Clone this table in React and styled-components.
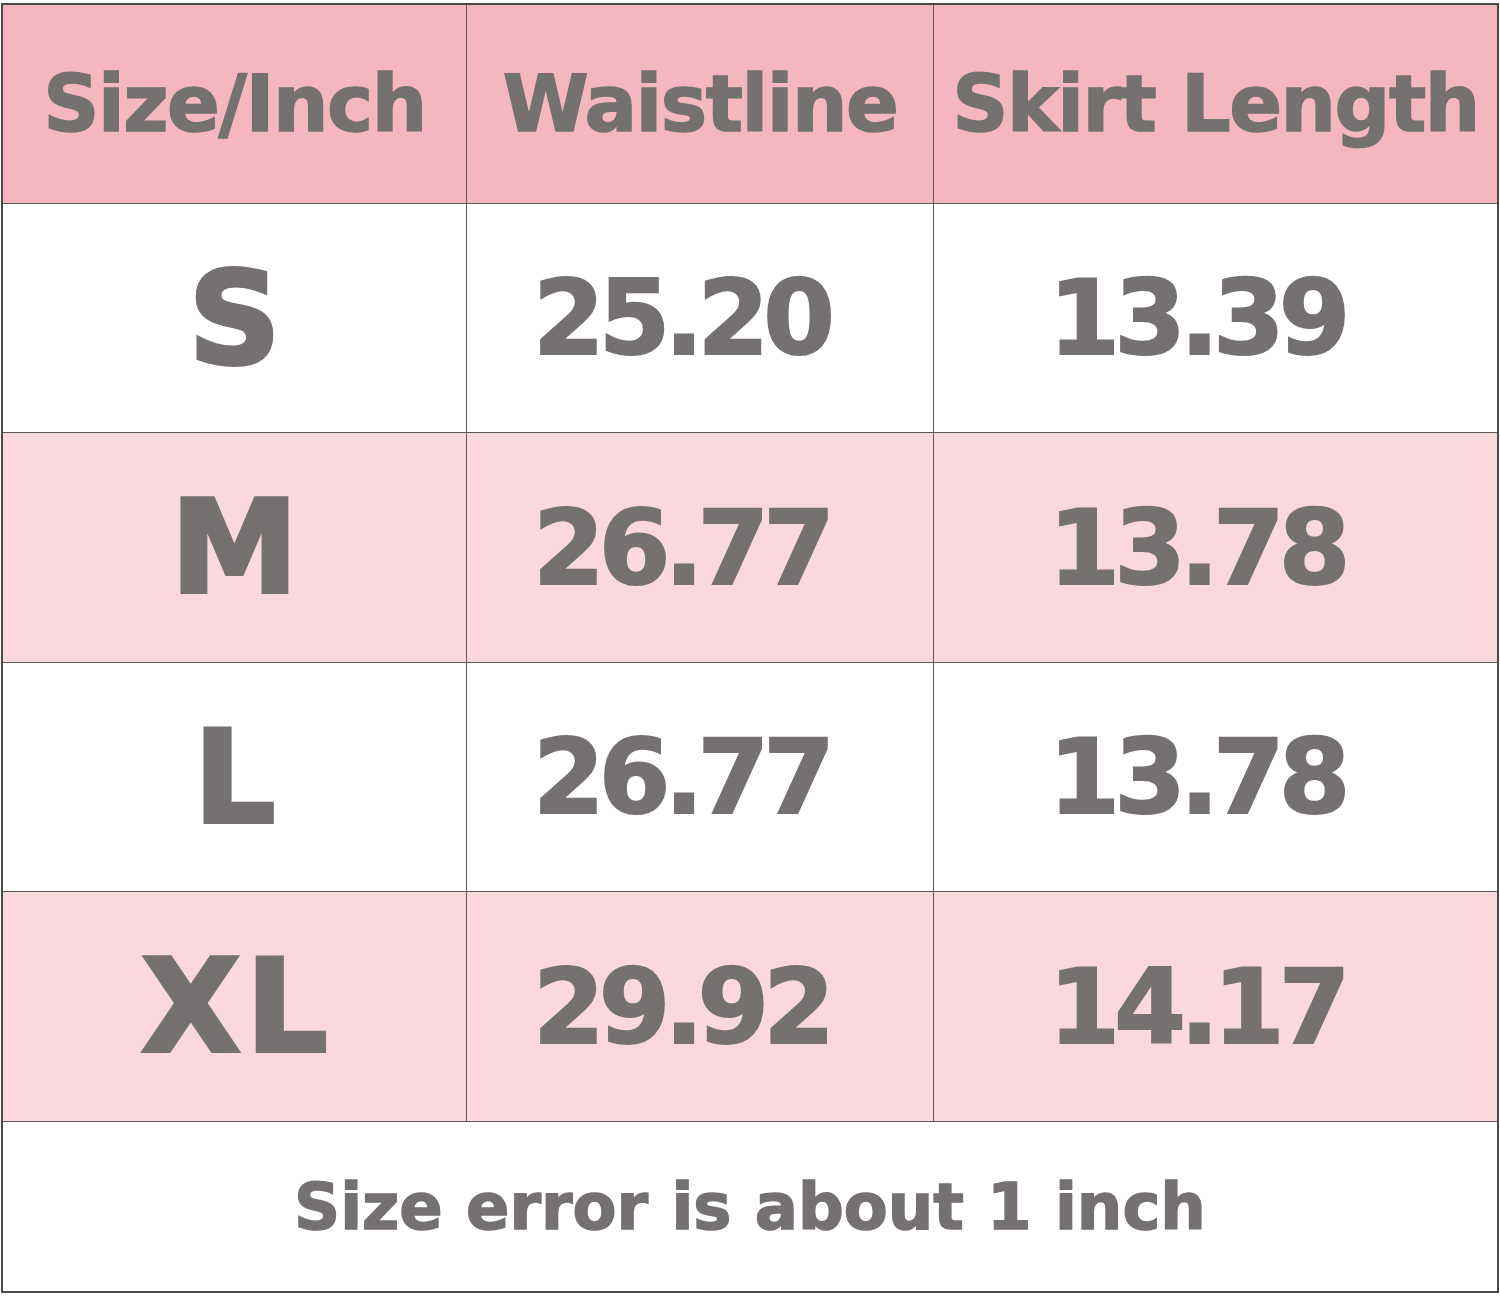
import React from 'react';
import styled, { createGlobalStyle } from 'styled-components';

const rows = [
    { size: 'S', waist: '25.20', length: '13.39' },
    { size: 'M', waist: '26.77', length: '13.78' },
    { size: 'L', waist: '26.77', length: '13.78' },
    { size: 'XL', waist: '29.92', length: '14.17' }
];

export default function App() {
    return (
        <>
            <GlobalStyle />
            <Chart>
                <HeadCell>Size/Inch</HeadCell>
                <HeadCell>Waistline</HeadCell>
                <HeadCell>Skirt Length</HeadCell>
                {rows.map((row, index) => (
                    <React.Fragment key={row.size}>
                        <SizeCell $alt={index % 2 === 1} $wide={row.size.length > 1}>{row.size}</SizeCell>
                        <NumCell $alt={index % 2 === 1}>{row.waist}</NumCell>
                        <NumCell $alt={index % 2 === 1}>{row.length}</NumCell>
                    </React.Fragment>
                ))}
                <Footer>Size error is about 1 inch</Footer>
            </Chart>
        </>
    );
}

const GlobalStyle = createGlobalStyle`
    body {
        margin: 0;
        background: #ffffff;
        font-family: "DejaVu Sans", sans-serif;
    }
`;

const Chart = styled.div`
    margin: 3px 0 0 1px;
    width: 1494px;
    display: grid;
    grid-template-columns: 463px 466px 563px;
    grid-template-rows: 198px 228px 229px 228px 229px 169px;
    gap: 1px;
    background: #5c5a5a;
    border: 2px solid #4a4848;
    color: #747170;
    -webkit-text-stroke: 1.5px #747170;
    font-weight: bold;
`;

const Cell = styled.div`
    display: flex;
    align-items: center;
    justify-content: center;
    white-space: nowrap;
    background: ${p => (p.$alt ? '#fad8dd' : '#ffffff')};
`;

const HeadCell = styled(Cell)`
    background: #f4b7bf;
    font-size: 78px;
    letter-spacing: -1.5px;
`;

const SizeCell = styled(Cell)`
    font-size: 128px;
    -webkit-text-stroke-width: 4px;
    letter-spacing: ${p => (p.$wide ? '6px' : '0')};
    padding-left: ${p => (p.$wide ? '6px' : '0')};
`;

const NumCell = styled(Cell)`
    font-size: 103px;
    -webkit-text-stroke-width: 2px;
    letter-spacing: -6px;
    padding-right: 38px;
`;

const Footer = styled(Cell)`
    grid-column: 1 / -1;
    font-size: 64px;
    word-spacing: 1px;
`;
